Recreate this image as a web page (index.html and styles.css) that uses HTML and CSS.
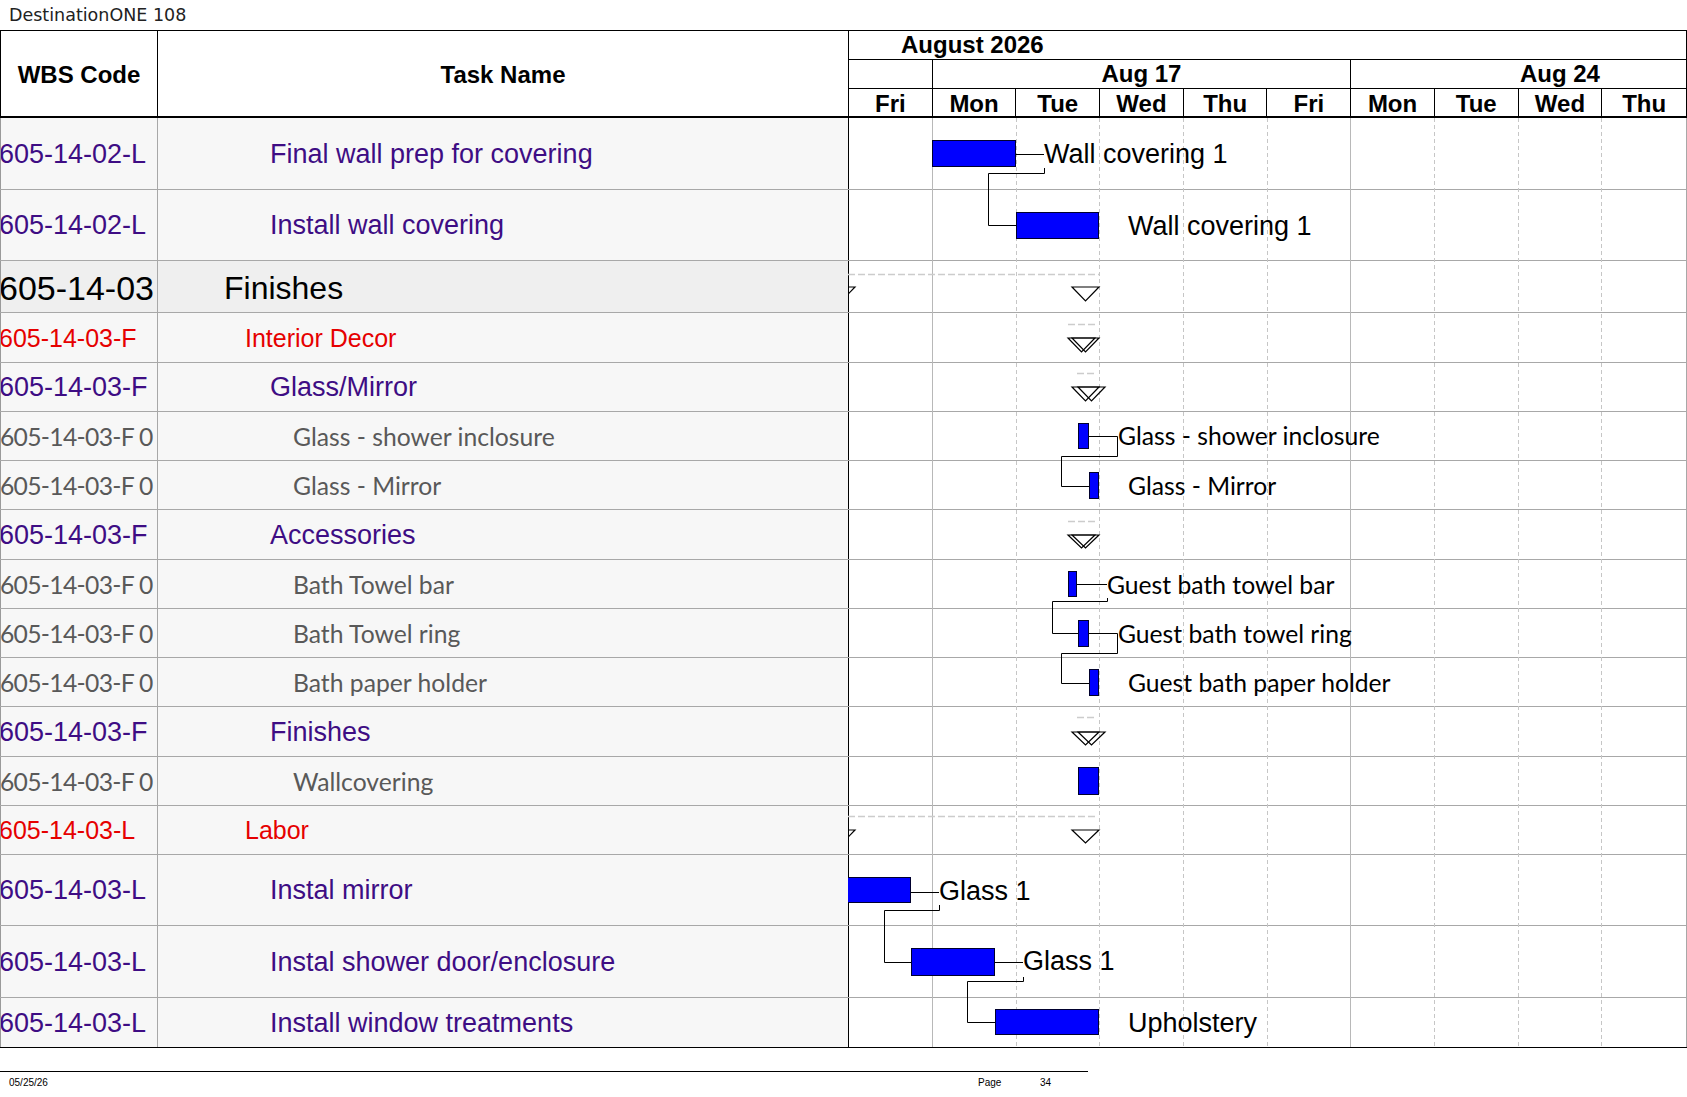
FILE: index.html
```html
<!DOCTYPE html>
<html lang="en">
<head>
<meta charset="utf-8">
<title>DestinationONE 108</title>
<link rel="stylesheet" href="styles.css">
</head>
<body>
<div class="title">DestinationONE 108</div>
<div class="chart">
  <div class="head">
    <div class="h-cell h-wbs">WBS Code</div>
    <div class="h-cell h-task">Task Name</div>
    <div class="g-head">
      <div class="g-month">August 2026</div>
      <div class="g-weeks"><div></div><div>Aug 17</div><div>Aug 24</div></div>
      <div class="g-days">
        <div>Fri</div><div>Mon</div><div>Tue</div><div>Wed</div><div>Thu</div>
        <div>Fri</div><div>Mon</div><div>Tue</div><div>Wed</div><div>Thu</div>
      </div>
    </div>
  </div>
  <div class="rows">
    <div class="row h72 t-purple"><div class="wbs">605-14-02-L</div><div class="name">Final wall prep for covering</div><div class="gcell"></div></div>
    <div class="row h71 t-purple"><div class="wbs">605-14-02-L</div><div class="name">Install wall covering</div><div class="gcell"></div></div>
    <div class="row h52 t-black"><div class="wbs">605-14-03</div><div class="name">Finishes</div><div class="gcell"></div></div>
    <div class="row h50 t-red"><div class="wbs">605-14-03-F</div><div class="name">Interior Decor</div><div class="gcell"></div></div>
    <div class="row h49 t-purple"><div class="wbs">605-14-03-F</div><div class="name">Glass/Mirror</div><div class="gcell"></div></div>
    <div class="row h49 t-gray"><div class="wbs">605-14-03-F 0</div><div class="name">Glass - shower inclosure</div><div class="gcell"></div></div>
    <div class="row h49 t-gray"><div class="wbs">605-14-03-F 0</div><div class="name">Glass - Mirror</div><div class="gcell"></div></div>
    <div class="row h50 t-purple"><div class="wbs">605-14-03-F</div><div class="name">Accessories</div><div class="gcell"></div></div>
    <div class="row h49 t-gray"><div class="wbs">605-14-03-F 0</div><div class="name">Bath Towel bar</div><div class="gcell"></div></div>
    <div class="row h49 t-gray"><div class="wbs">605-14-03-F 0</div><div class="name">Bath Towel ring</div><div class="gcell"></div></div>
    <div class="row h49 t-gray"><div class="wbs">605-14-03-F 0</div><div class="name">Bath paper holder</div><div class="gcell"></div></div>
    <div class="row h50 t-purple"><div class="wbs">605-14-03-F</div><div class="name">Finishes</div><div class="gcell"></div></div>
    <div class="row h49 t-gray"><div class="wbs">605-14-03-F 0</div><div class="name">Wallcovering</div><div class="gcell"></div></div>
    <div class="row h49 t-red"><div class="wbs">605-14-03-L</div><div class="name">Labor</div><div class="gcell"></div></div>
    <div class="row h71 t-purple"><div class="wbs">605-14-03-L</div><div class="name">Instal mirror</div><div class="gcell"></div></div>
    <div class="row h72 t-purple"><div class="wbs">605-14-03-L</div><div class="name">Instal shower door/enclosure</div><div class="gcell"></div></div>
    <div class="row h49 t-purple last"><div class="wbs">605-14-03-L</div><div class="name">Install window treatments</div><div class="gcell"></div></div>
  </div>
  <svg class="overlay" viewBox="0 0 837 929" width="837" height="929" xmlns="http://www.w3.org/2000/svg">
    <path class="gl-solid" d="M84.5 0V929M502.5 0V929"/>
    <path class="gl-dash" d="M168.5 0V929M251.5 0V929M335.5 0V929M419.5 0V929M586.5 0V929M670.5 0V929M753.5 0V929"/>
    <path class="sum-dash" d="M0 156.5H251M220 206.5H248M229 255.5H248M220 403.5H248M229 599.5H248M0 698.5H249"/>
    <g class="tri">
      <polygon points="224,169 251,169 237.5,183"/>
      <polygon points="-20,169 7,169 -6.5,183"/>
      <polygon points="220,220 247,220 233.5,234"/>
      <polygon points="224,220 251,220 237.5,234"/>
      <polygon points="224,269 251,269 237.5,283"/>
      <polygon points="230,269 257,269 243.5,283"/>
      <polygon points="220,417 247,417 233.5,430"/>
      <polygon points="224,417 251,417 237.5,430"/>
      <polygon points="224,614 251,614 237.5,627"/>
      <polygon points="230,614 257,614 243.5,627"/>
      <polygon points="224,712 251,712 237.5,725"/>
      <polygon points="-20,712 7,712 -6.5,726"/>
    </g>
    <path class="link" d="M168 36.5H196M196.5 50V55.5H140.5V107.5H168"/>
    <path class="link" d="M241 318.5H269.5V338.5H213.5V368.5H241"/>
    <path class="link" d="M229 466.5H259M259.5 480V483.5H204.5V515.5H230"/>
    <path class="link" d="M241 515.5H269.5V535.5H213.5V565.5H241"/>
    <path class="link" d="M63 774.5H91M91.5 787V792.5H36.5V844.5H63"/>
    <path class="link" d="M147 844.5H175M175.5 859V863.5H119.5V904.5H147"/>
    <g class="bar">
      <rect x="84.5" y="22.5" width="83" height="26"/>
      <rect x="168.5" y="94.5" width="82" height="26"/>
      <rect x="230.5" y="305.5" width="10" height="25"/>
      <rect x="241.5" y="354.5" width="9" height="26"/>
      <rect x="220.5" y="453.5" width="8" height="25"/>
      <rect x="230.5" y="502.5" width="10" height="26"/>
      <rect x="241.5" y="551.5" width="9" height="26"/>
      <rect x="230.5" y="649.5" width="20" height="27"/>
      <rect x="-1" y="759.5" width="63.5" height="25"/>
      <rect x="63.5" y="830.5" width="83" height="27"/>
      <rect x="147.5" y="891.5" width="103" height="25"/>
    </g>
    <text class="lbl-a" x="196" y="45">Wall covering 1</text>
    <text class="lbl-a" x="280" y="117">Wall covering 1</text>
    <text class="lbl-c" x="270" y="327">Glass - shower inclosure</text>
    <text class="lbl-c" x="280" y="377">Glass - Mirror</text>
    <text class="lbl-c" x="259" y="476">Guest bath towel bar</text>
    <text class="lbl-c" x="270" y="525">Guest bath towel ring</text>
    <text class="lbl-c" x="280" y="574">Guest bath paper holder</text>
    <text class="lbl-a" x="91" y="782">Glass 1</text>
    <text class="lbl-a" x="175" y="852">Glass 1</text>
    <text class="lbl-a" x="280" y="914">Upholstery</text>
  </svg>
</div>
<div class="footer-rule"></div>
<div class="footer"><span>05/25/26</span><span>Page</span><span>34</span></div>
</body>
</html>
```
FILE: styles.css
```css
body {
  margin: 0;
  background: #ffffff;
  color: #000000;
  font-family: "Liberation Sans", Arial, sans-serif;
}

.title {
  height: 30px;
  padding-left: 9px;
  font-family: "DejaVu Sans", "Liberation Sans", sans-serif;
  font-size: 17.5px;
  line-height: 30px;
  color: #222222;
  box-sizing: border-box;
}

.chart {
  position: relative;
  width: 1687px;
  border-top: 1px solid #000;
  border-bottom: 1px solid #000;
}

.head {
  display: grid;
  grid-template-columns: 158px 691px 838px;
  height: 87px;
  box-sizing: border-box;
  border-bottom: 2px solid #000;
}

.h-cell {
  display: flex;
  align-items: center;
  justify-content: center;
  font-weight: bold;
  font-size: 24px;
  padding-top: 2px;
}

.h-wbs {
  border-left: 1px solid #000;
  border-right: 1px solid #000;
}

.h-task {
  border-right: 1px solid #000;
}

.g-head {
  display: flex;
  flex-direction: column;
  overflow: hidden;
  border-right: 1px solid #000;
  font-weight: bold;
  font-size: 24px;
}

.g-month {
  flex: none;
  height: 29px;
  box-sizing: border-box;
  border-bottom: 1px solid #000;
  padding-left: 52px;
  line-height: 28px;
}

.g-weeks {
  flex: none;
  display: grid;
  grid-template-columns: 83.7px 418.5px 418.5px;
  width: 920.7px;
  height: 29px;
  box-sizing: border-box;
  border-bottom: 1px solid #000;
}

.g-weeks > div {
  border-right: 1px solid #000;
  text-align: center;
  line-height: 28px;
}

.g-days {
  flex: 1;
  display: grid;
  grid-template-columns: repeat(10, 1fr);
}

.g-days > div {
  display: flex;
  align-items: center;
  justify-content: center;
  line-height: 24px;
  padding-top: 2px;
  border-right: 1px solid #000;
}

.g-days > div:last-child {
  border-right: none;
}

.row {
  display: grid;
  grid-template-columns: 158px 691px 838px;
  box-sizing: border-box;
  border-bottom: 1px solid #a8a8a8;
}

.row.last {
  border-bottom: none;
}

.h49 { height: 49px; }
.h50 { height: 50px; }
.h52 { height: 52px; }
.h71 { height: 71px; }
.h72 { height: 72px; }

.wbs,
.name {
  display: flex;
  align-items: center;
  white-space: nowrap;
  overflow: hidden;
  background: #f7f7f7;
  padding-top: 1px;
}

.wbs {
  border-left: 1px solid #9a9a9a;
  border-right: 1px solid #a8a8a8;
}

.name {
  border-right: 1px solid #000;
}

.gcell {
  background: #ffffff;
  border-right: 1px solid #a8a8a8;
}

.t-purple {
  color: #3e0d84;
  font-size: 27px;
}
.t-purple .wbs { text-indent: -2px; }
.t-purple .name { padding-left: 112px; }

.t-red {
  color: #e60000;
  font-size: 25px;
}
.t-red .wbs { text-indent: -2px; }
.t-red .name { padding-left: 87px; }

.t-black {
  color: #000;
}
.t-black .wbs,
.t-black .name {
  background: #efefef;
  padding-top: 3px;
}
.t-black .wbs { font-size: 34px; text-indent: -2px; }
.t-black .name { font-size: 32px; padding-left: 66px; }

.t-gray {
  color: #595959;
  font-family: Lato, "Noto Sans", sans-serif;
  font-size: 24.7px;
}
.t-gray .wbs { letter-spacing: -0.7px; text-indent: -1px; }
.t-gray .name { padding-left: 135px; }

.overlay {
  position: absolute;
  left: 848px;
  top: 87px;
  width: 837px;
  height: 929px;
  overflow: hidden;
  pointer-events: none;
}

.gl-solid {
  fill: none;
  stroke: #b8b8b8;
  stroke-width: 1;
}

.gl-dash {
  fill: none;
  stroke: #c6c6c6;
  stroke-width: 1;
  stroke-dasharray: 4 3;
}

.sum-dash {
  fill: none;
  stroke: #cccccc;
  stroke-width: 1.5;
  stroke-dasharray: 7 3;
}

.tri polygon {
  fill: none;
  stroke: #000;
  stroke-width: 1.2;
}

.link {
  fill: none;
  stroke: #000;
  stroke-width: 1;
}

.bar rect {
  fill: #0000ff;
  stroke: #00002e;
  stroke-width: 1;
}

.lbl-a {
  font-family: "Liberation Sans", Arial, sans-serif;
  font-size: 27px;
  fill: #000;
}

.lbl-c {
  font-family: Lato, "Noto Sans", sans-serif;
  font-size: 24.7px;
  fill: #000;
}

.footer-rule {
  width: 1088px;
  margin-top: 23px;
  border-top: 1px solid #000;
}

.footer {
  display: grid;
  grid-template-columns: 969px 62px auto;
  width: 1100px;
  padding-left: 9px;
  margin-top: 5px;
  font-size: 10px;
  line-height: 12px;
  color: #000;
}
```
